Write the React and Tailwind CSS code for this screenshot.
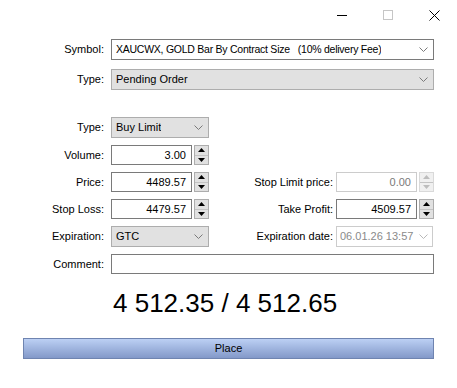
const font = { fontFamily: '"Liberation Sans", Arial, sans-serif' };

const Chevron = ({ disabled }) => (
  <svg width="9" height="5" viewBox="0 0 9 5" className="shrink-0">
    <path d="M0.5 0.5 L4.5 4.5 L8.5 0.5" fill="none" stroke={disabled ? '#b8b8b8' : '#7a7a7a'} strokeWidth="1" />
  </svg>
);

const Select = ({ value, className = '', textClass = '', gray = false }) => (
  <div
    className={`flex h-[21px] items-center justify-between border pl-[4px] pr-[5px] text-[11px] text-black ${
      gray ? 'border-[#adadad] bg-[#e1e1e1]' : 'border-[#7a7a7a] bg-white'
    } ${className}`}
  >
    <span className={`truncate whitespace-pre ${textClass}`}>{value}</span>
    <Chevron />
  </div>
);

const Spinner = ({ disabled }) => {
  const c = disabled ? '#bdbdbd' : '#000';
  return (
    <div className={`ml-[2px] flex h-[20px] w-[15px] flex-col border ${disabled ? 'border-[#d9d9d9] bg-[#f0f0f0]' : 'border-[#adadad] bg-[#e1e1e1]'}`}>
      <div className="flex flex-1 items-center justify-center border-b border-[#c4c4c4]">
        <svg width="7" height="4" viewBox="0 0 7 4"><path d="M3.5 0 L7 4 L0 4 Z" fill={c} /></svg>
      </div>
      <div className="flex flex-1 items-center justify-center">
        <svg width="7" height="4" viewBox="0 0 7 4"><path d="M0 0 L7 0 L3.5 4 Z" fill={c} /></svg>
      </div>
    </div>
  );
};

const Number = ({ value, disabled }) => (
  <div className="flex items-center">
    <div
      className={`flex h-[20px] w-[81px] items-center justify-end border pr-[5px] text-[11px] ${
        disabled ? 'border-[#cccccc] bg-white text-[#7a7a7a]' : 'border-[#7a7a7a] bg-white text-black'
      }`}
    >
      {value}
    </div>
    <Spinner disabled={disabled} />
  </div>
);

const Label = ({ children }) => (
  <div className="w-[104px] shrink-0 text-right text-[11px] text-black">{children}</div>
);

const RightLabel = ({ children }) => (
  <div className="w-[124px] shrink-0 text-right text-[11px] text-black">{children}</div>
);

export default function App() {
  return (
    <div className="h-[388px] w-[457px] overflow-hidden bg-white" style={font}>
      {/* title bar */}
      <div className="flex h-[30px] items-center justify-end">
        <div className="flex w-[46px] items-center justify-center">
          <div className="h-px w-[10px] bg-black" />
        </div>
        <div className="flex w-[46px] items-center justify-center">
          <div className="h-[10px] w-[10px] border border-[#c6c6c6]" />
        </div>
        <div className="flex w-[46px] items-center justify-center">
          <svg width="11" height="11" viewBox="0 0 11 11">
            <path d="M0.5 0.5 L10.5 10.5 M10.5 0.5 L0.5 10.5" stroke="#000" strokeWidth="1" />
          </svg>
        </div>
      </div>

      <div className="mt-[9px] flex items-center">
        <Label>Symbol:</Label>
        <Select
          className="ml-[7px] w-[323px]"
          textClass="text-[10.5px] tracking-[-0.25px]"
          value="XAUCWX, GOLD Bar By Contract Size   (10% delivery Fee)"
        />
      </div>
      <div className="mt-[9px] flex items-center">
        <Label>Type:</Label>
        <Select gray className="ml-[7px] w-[323px]" value="Pending Order" />
      </div>

      <div className="mt-[27px] flex items-center">
        <Label>Type:</Label>
        <Select gray className="ml-[7px] w-[98px]" value="Buy Limit" />
      </div>
      <div className="mt-[7px] flex items-center">
        <Label>Volume:</Label>
        <div className="ml-[7px]">
          <Number value="3.00" />
        </div>
      </div>
      <div className="mt-[7px] flex items-center">
        <Label>Price:</Label>
        <div className="ml-[7px]">
          <Number value="4489.57" />
        </div>
        <RightLabel>Stop Limit price:</RightLabel>
        <div className="ml-[3px]">
          <Number value="0.00" disabled />
        </div>
      </div>
      <div className="mt-[7px] flex items-center">
        <Label>Stop Loss:</Label>
        <div className="ml-[7px]">
          <Number value="4479.57" />
        </div>
        <RightLabel>Take Profit:</RightLabel>
        <div className="ml-[3px]">
          <Number value="4509.57" />
        </div>
      </div>
      <div className="mt-[7px] flex items-center">
        <Label>Expiration:</Label>
        <Select gray className="ml-[7px] w-[98px]" value="GTC" />
        <RightLabel>Expiration date:</RightLabel>
        <div className="ml-[3px] flex h-[21px] w-[97px] items-center justify-between border border-[#cccccc] bg-white pl-[3px] pr-[4px] text-[11px] text-[#8a8a8a]">
          <span>06.01.26 13:57</span>
          <Chevron disabled />
        </div>
      </div>
      <div className="mt-[7px] flex items-center">
        <Label>Comment:</Label>
        <div className="ml-[7px] h-[20px] w-[323px] border border-[#7a7a7a] bg-white" />
      </div>

      <div className="mt-[14px] flex h-[30px] items-center pl-[113px] text-[26px] leading-none text-black">
        4 512.35 / 4 512.65
      </div>

      <div className="mt-[20px] flex justify-center">
        <div className="flex h-[21px] w-[411px] items-center justify-center border border-[#6f84b0] bg-gradient-to-b from-[#bcd0f4] to-[#8399c9] text-[11px] text-black">
          Place
        </div>
      </div>
    </div>
  );
}
